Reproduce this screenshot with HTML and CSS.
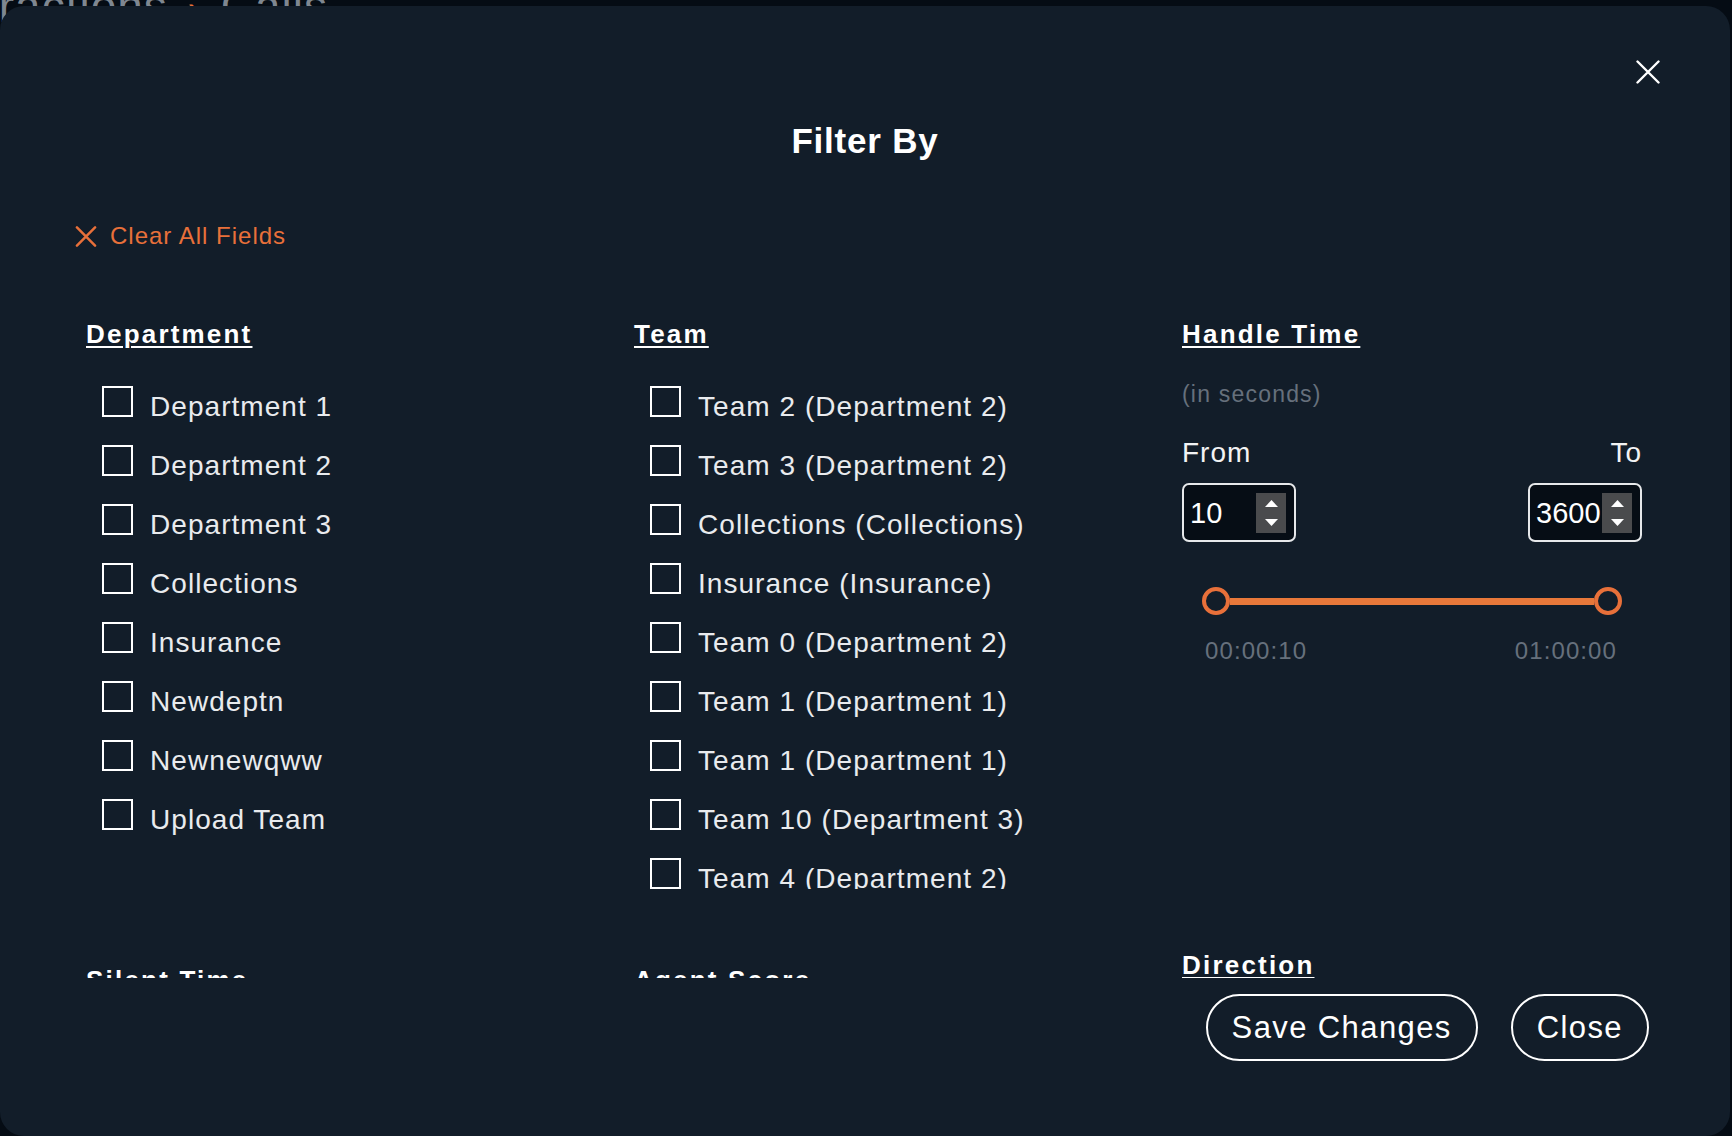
FILE: index.html
```html
<!DOCTYPE html>
<html lang="en">
<head>
<meta charset="utf-8">
<title>Filter By</title>
<link rel="stylesheet" href="styles.css">
</head>
<body>
<header class="page-header">
  <span class="crumb">Interactions</span>
  <span class="crumb-sep">›</span>
  <span class="crumb">Calls</span>
</header>

<div class="modal" role="dialog" aria-labelledby="filter-title">
  <button class="modal-x" aria-label="Close dialog">
    <svg viewBox="0 0 24 24" width="24" height="24"><path d="M1.5 1.5 L22.5 22.5 M22.5 1.5 L1.5 22.5" stroke="#ffffff" stroke-width="2.4" stroke-linecap="round" fill="none"/></svg>
  </button>

  <h1 class="modal-title" id="filter-title">Filter By</h1>

  <button class="clear-all">
    <svg viewBox="0 0 22 22" width="22" height="21"><path d="M1.5 1.5 L20.5 20.5 M20.5 1.5 L1.5 20.5" stroke="#e8703a" stroke-width="2.6" stroke-linecap="round" fill="none"/></svg>
    <span>Clear All Fields</span>
  </button>

  <div class="modal-body">
    <div class="filter-grid">
      <section class="filter">
        <h2 class="filter-heading">Department</h2>
        <ul class="check-list">
          <li class="check-item"><span class="box"></span><span class="check-label">Department 1</span></li>
          <li class="check-item"><span class="box"></span><span class="check-label">Department 2</span></li>
          <li class="check-item"><span class="box"></span><span class="check-label">Department 3</span></li>
          <li class="check-item"><span class="box"></span><span class="check-label">Collections</span></li>
          <li class="check-item"><span class="box"></span><span class="check-label">Insurance</span></li>
          <li class="check-item"><span class="box"></span><span class="check-label">Newdeptn</span></li>
          <li class="check-item"><span class="box"></span><span class="check-label">Newnewqww</span></li>
          <li class="check-item"><span class="box"></span><span class="check-label">Upload Team</span></li>
        </ul>
      </section>

      <section class="filter">
        <h2 class="filter-heading">Team</h2>
        <ul class="check-list">
          <li class="check-item"><span class="box"></span><span class="check-label">Team 2 (Department 2)</span></li>
          <li class="check-item"><span class="box"></span><span class="check-label">Team 3 (Department 2)</span></li>
          <li class="check-item"><span class="box"></span><span class="check-label">Collections (Collections)</span></li>
          <li class="check-item"><span class="box"></span><span class="check-label">Insurance (Insurance)</span></li>
          <li class="check-item"><span class="box"></span><span class="check-label">Team 0 (Department 2)</span></li>
          <li class="check-item"><span class="box"></span><span class="check-label">Team 1 (Department 1)</span></li>
          <li class="check-item"><span class="box"></span><span class="check-label">Team 1 (Department 1)</span></li>
          <li class="check-item"><span class="box"></span><span class="check-label">Team 10 (Department 3)</span></li>
          <li class="check-item"><span class="box"></span><span class="check-label">Team 4 (Department 2)</span></li>
        </ul>
      </section>

      <section class="filter">
        <h2 class="filter-heading">Handle Time</h2>
        <div class="sub">(in seconds)</div>
        <div class="range-labels"><span>From</span><span>To</span></div>
        <div class="num-row">
          <div class="num-input">
            <span class="num-value">10</span>
            <span class="spin">
              <svg viewBox="0 0 13 7" width="13" height="7"><path d="M0 7 L6.5 0 L13 7 Z" fill="#fff"/></svg>
              <svg viewBox="0 0 13 7" width="13" height="7"><path d="M0 0 L13 0 L6.5 7 Z" fill="#fff"/></svg>
            </span>
          </div>
          <div class="num-input">
            <span class="num-value">3600</span>
            <span class="spin">
              <svg viewBox="0 0 13 7" width="13" height="7"><path d="M0 7 L6.5 0 L13 7 Z" fill="#fff"/></svg>
              <svg viewBox="0 0 13 7" width="13" height="7"><path d="M0 0 L13 0 L6.5 7 Z" fill="#fff"/></svg>
            </span>
          </div>
        </div>
        <div class="slider">
          <span class="knob"></span>
          <span class="track"></span>
          <span class="knob"></span>
        </div>
        <div class="range-values"><span>00:00:10</span><span>01:00:00</span></div>
      </section>

      <section class="filter">
        <h2 class="filter-heading">Silent Time</h2>
      </section>
      <section class="filter">
        <h2 class="filter-heading">Agent Score</h2>
      </section>
      <section class="filter filter-direction">
        <h2 class="filter-heading">Direction</h2>
      </section>
    </div>
  </div>

  <div class="modal-footer">
    <button class="pill">Save Changes</button>
    <button class="pill">Close</button>
  </div>
</div>
</body>
</html>
```

FILE: styles.css
```css
* { box-sizing: border-box; }

html, body {
  margin: 0;
  height: 100%;
}

body {
  position: relative;
  overflow: hidden;
  background: #050c14;
  color: #ffffff;
  font-family: "Liberation Sans", Arial, sans-serif;
}

/* page behind the dialog */
.page-header {
  display: flex;
  align-items: baseline;
  gap: 20px;
  margin: -14px 0 0 -82px;
  font-size: 46px;
  line-height: 40px;
  color: #7f8790;
  letter-spacing: 1px;
  white-space: nowrap;
}
.crumb-sep { color: #e8703a; font-size: 36px; }

/* dialog */
.modal {
  position: absolute;
  top: 6px;
  left: 0;
  width: 1730px;
  height: 1130px;
  padding-top: 114px;
  background: #121d29;
  border-radius: 24px;
}

.modal-x {
  position: absolute;
  top: 54px;
  right: 70px;
  width: 24px;
  height: 24px;
  padding: 0;
  border: 0;
  background: none;
  display: block;
}
.modal-x svg { display: block; }

.modal-title {
  margin: 0;
  text-align: center;
  font-size: 35px;
  line-height: 42px;
  font-weight: 700;
  letter-spacing: 0.8px;
}

.clear-all {
  display: flex;
  align-items: center;
  gap: 13px;
  height: 30px;
  margin: 59px 0 0 75px;
  padding: 0;
  border: 0;
  background: none;
  color: #e8703a;
  font-family: "Liberation Sans", Arial, sans-serif;
  font-size: 24px;
  line-height: 30px;
  letter-spacing: 1px;
}
.clear-all svg { display: block; }

.modal-body {
  height: 727px;
  overflow: hidden;
}

.filter-grid {
  display: grid;
  grid-template-columns: repeat(3, 460px);
  column-gap: 88px;
  row-gap: 75px;
  padding: 67px 0 0 86px;
  align-items: start;
}

.filter-heading {
  margin: 0;
  font-size: 26px;
  line-height: 32px;
  font-weight: 700;
  letter-spacing: 2.2px;
  text-decoration: underline;
  text-decoration-thickness: 2px;
  text-underline-offset: 3px;
  white-space: nowrap;
}

.filter-direction { margin-top: -15px; }

.check-list {
  list-style: none;
  margin: 36px 0 0;
  padding: 0 0 0 16px;
  height: 503px;
  overflow: hidden;
  display: grid;
  grid-auto-rows: 39px;
  row-gap: 20px;
  align-content: start;
}

.check-item {
  display: flex;
  align-items: flex-start;
  gap: 17px;
}

.box {
  flex: none;
  width: 31px;
  height: 31px;
  border: 2px solid #ffffff;
}

.check-label {
  margin-top: 3px;
  font-size: 28px;
  line-height: 36px;
  letter-spacing: 1.05px;
  color: #e9ebee;
  white-space: nowrap;
}

/* handle time */
.sub {
  margin-top: 30px;
  font-size: 23px;
  line-height: 28px;
  letter-spacing: 1.2px;
  color: #66707c;
}

.range-labels {
  display: flex;
  justify-content: space-between;
  margin-top: 28px;
  font-size: 28px;
  line-height: 34px;
  letter-spacing: 1px;
  color: #f2f3f4;
}

.num-row {
  display: flex;
  justify-content: space-between;
  margin-top: 13px;
}

.num-input {
  display: flex;
  align-items: center;
  width: 114px;
  height: 59px;
  padding: 0 8px 0 6px;
  border: 2px solid #e6e8ea;
  border-radius: 7px;
  background: #060d15;
}

.num-value {
  font-size: 29px;
  line-height: 34px;
  color: #ffffff;
}

.spin {
  margin-left: auto;
  width: 30px;
  height: 40px;
  display: flex;
  flex-direction: column;
  align-items: center;
  justify-content: center;
  gap: 12px;
  background: #4a4b4d;
}
.spin svg { display: block; }

.slider {
  display: flex;
  align-items: center;
  width: 420px;
  height: 28px;
  margin: 45px 0 0 20px;
}

.knob {
  flex: none;
  width: 28px;
  height: 28px;
  border: 4px solid #e8703a;
  border-radius: 50%;
  background: #121d29;
}

.track {
  flex: 1;
  height: 7px;
  background: #e8783a;
}

.range-values {
  display: flex;
  justify-content: space-between;
  margin-top: 21px;
  padding: 0 25px 0 23px;
  font-size: 24px;
  line-height: 30px;
  letter-spacing: 1.1px;
  color: #66707c;
}

/* footer */
.modal-footer {
  display: flex;
  justify-content: flex-end;
  gap: 33px;
  margin-top: 16px;
  padding-right: 81px;
}

.pill {
  height: 67px;
  padding: 0 24px;
  border: 2px solid #ffffff;
  border-radius: 34px;
  background: transparent;
  color: #ffffff;
  font-family: "Liberation Sans", Arial, sans-serif;
  font-size: 31px;
  line-height: 63px;
  letter-spacing: 1.4px;
}
```
